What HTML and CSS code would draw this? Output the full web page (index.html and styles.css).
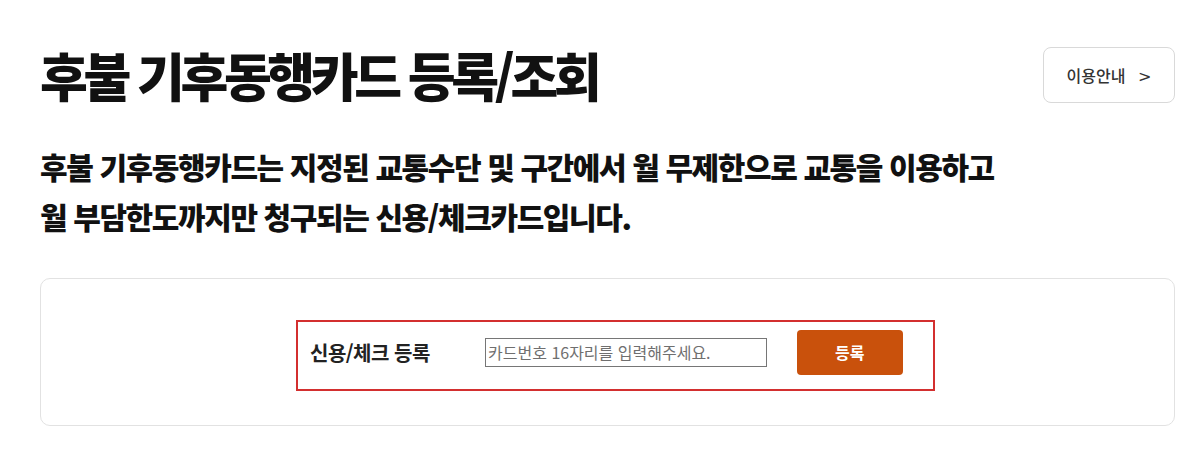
FILE: index.html
```html
<!DOCTYPE html>
<html lang="ko">
<head>
    <meta charset="utf-8">
    <title>후불 기후동행카드 등록/조회</title>
    <link rel="stylesheet" href="styles.css">
</head>
<body>
    <div class="page">
        <div class="page-header">
            <h1 class="page-title">후불 기후동행카드 등록/조회</h1>
            <button type="button" class="guide-btn">이용안내 <span class="guide-arrow">&gt;</span></button>
        </div>

        <p class="intro">후불 기후동행카드는 지정된 교통수단 및 구간에서 월 무제한으로 교통을 이용하고<br>월 부담한도까지만 청구되는 신용/체크카드입니다.</p>

        <div class="card-box">
            <form class="register-form">
                <label for="cardNumber" class="register-label">신용/체크 등록</label>
                <input type="text" id="cardNumber" class="register-input" placeholder="카드번호 16자리를 입력해주세요.">
                <button type="button" class="register-btn">등록</button>
            </form>
        </div>
    </div>
</body>
</html>
```

FILE: styles.css
```css
body {
    margin: 0;
    padding: 0;
    background: #ffffff;
    color: #111;
    font-family: "Noto Sans CJK KR", "Noto Sans", sans-serif;
}

.page {
    padding: 46px 25px 0 40px;
}

.page-header {
    display: flex;
    justify-content: space-between;
    align-items: center;
    height: 58px;
}

.page-title {
    margin: 0;
    font-size: 52px;
    font-weight: 900;
    letter-spacing: -4.4px;
    line-height: 58px;
    color: #111;
}

.guide-btn {
    height: 56px;
    width: 132px;
    background: #fff;
    border: 1px solid #d9d9d9;
    border-radius: 8px;
    font-family: inherit;
    font-size: 16px;
    font-weight: 500;
    color: #333;
    cursor: pointer;
}

.guide-arrow {
    margin-left: 8px;
    font-family: "DejaVu Sans", sans-serif;
    font-weight: 400;
}

.intro {
    margin: 37px 0 0;
    font-size: 30px;
    font-weight: 900;
    line-height: 50px;
    letter-spacing: -1.4px;
    color: #111;
}

.card-box {
    margin-top: 37px;
    height: 148px;
    box-sizing: border-box;
    padding-top: 6px;
    border: 1px solid #e2e2e2;
    border-radius: 10px;
    display: flex;
    justify-content: center;
    align-items: center;
}

.register-form {
    display: flex;
    align-items: center;
    width: 639px;
    height: 71px;
    box-sizing: border-box;
    border: 2px solid #d32f2f;
    padding: 0 30px 6px 12px;
    margin-left: 16px;
}

.register-label {
    width: 176px;
    font-size: 20px;
    font-weight: 700;
    letter-spacing: -0.5px;
    color: #222;
}

.register-input {
    width: 283px;
    height: 29px;
    box-sizing: border-box;
    border: 1px solid #767676;
    padding: 0 2px;
    font-family: inherit;
    font-size: 16px;
    color: #333;
}

.register-input::placeholder {
    color: #6f6f6f;
}

.register-btn {
    margin-left: 30px;
    width: 107px;
    height: 45px;
    background: #c9510c;
    color: #fff;
    border: none;
    border-radius: 4px;
    font-family: inherit;
    font-size: 16px;
    font-weight: 700;
    cursor: pointer;
}
```
